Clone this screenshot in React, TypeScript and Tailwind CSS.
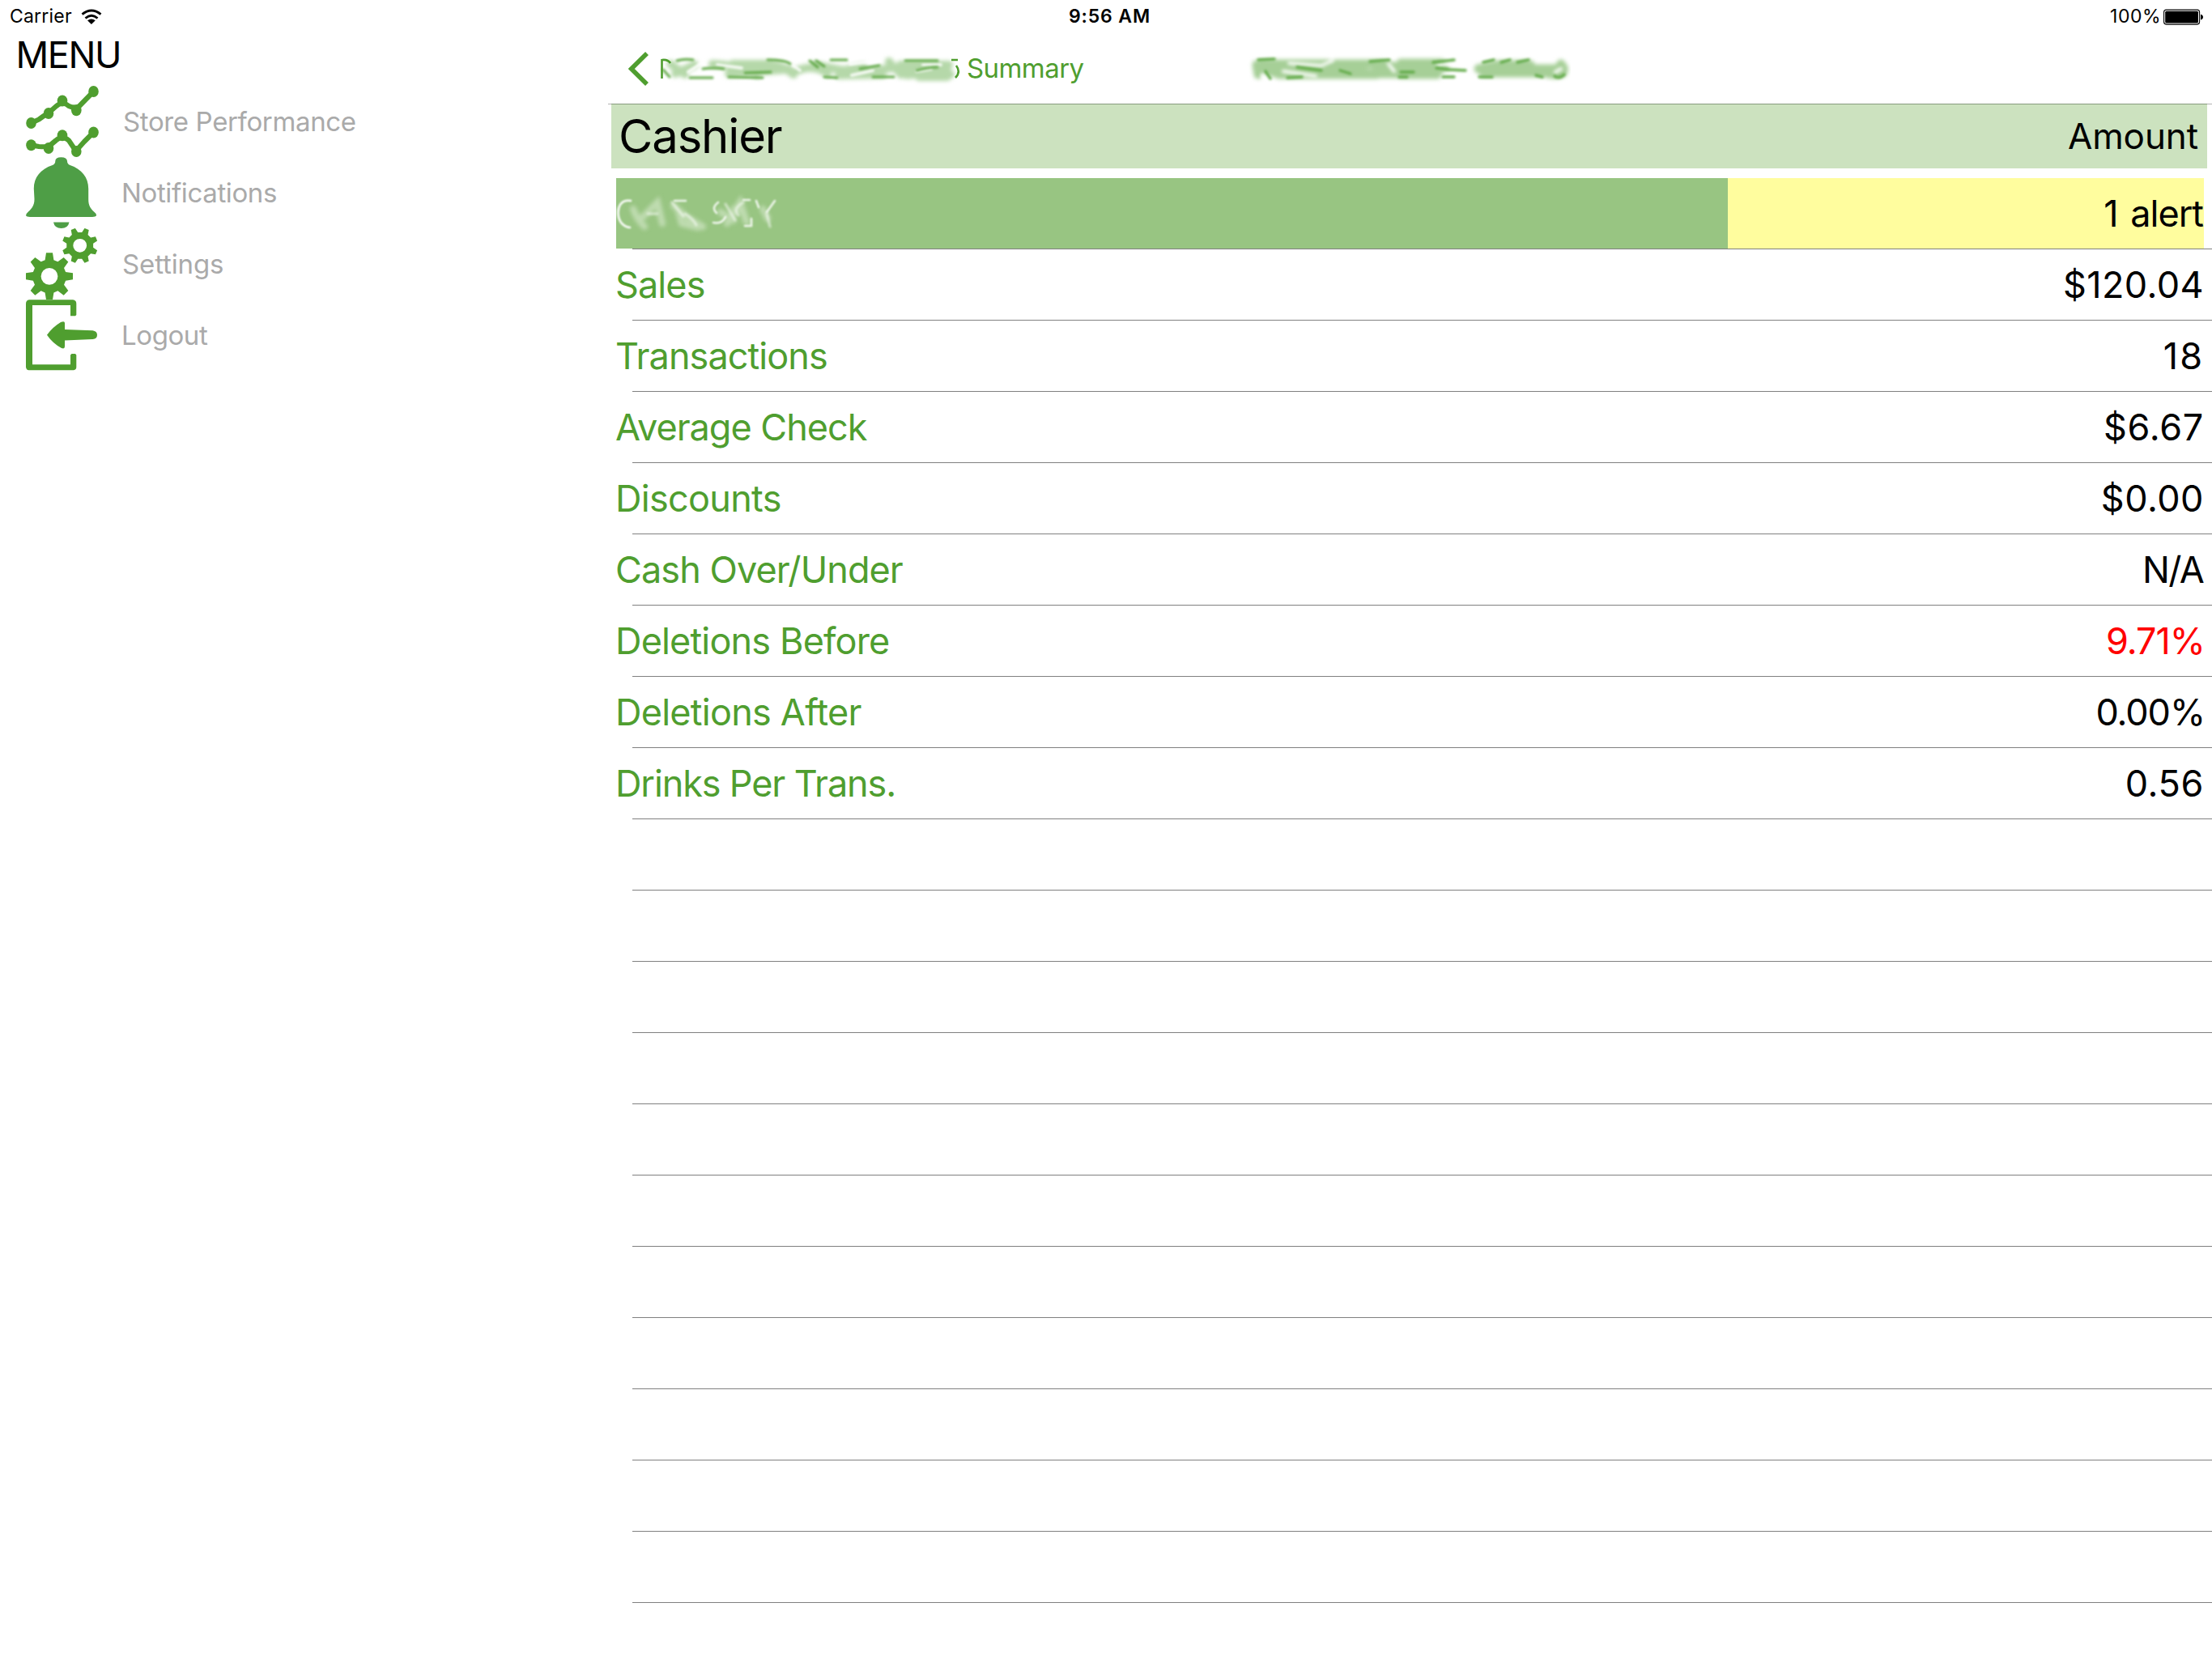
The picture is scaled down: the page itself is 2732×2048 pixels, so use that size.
import type { ReactNode } from 'react';

interface MenuItem {
  label: string;
  labelClass: string;
  icon: ReactNode;
}

interface Metric {
  label: string;
  labelClass: string;
  value: string;
  valueClass: string;
}

const metrics: Metric[] = [
  { label: 'Sales', labelClass: 'tracking-[-0.9px]', value: '$120.04', valueClass: 'tracking-[0.4px]' },
  { label: 'Transactions', labelClass: 'tracking-[-0.93px]', value: '18', valueClass: 'tracking-[2px]' },
  { label: 'Average Check', labelClass: 'tracking-[-1px]', value: '$6.67', valueClass: 'tracking-[0.7px]' },
  { label: 'Discounts', labelClass: 'tracking-[-0.7px]', value: '$0.00', valueClass: 'tracking-[0.5px]' },
  { label: 'Cash Over/Under', labelClass: 'tracking-[-0.92px]', value: 'N/A', valueClass: 'mr-px tracking-[-1.7px]' },
  { label: 'Deletions Before', labelClass: 'tracking-[-0.84px]', value: '9.71%', valueClass: '-mr-px tracking-[-1px] text-[#ff0000]' },
  { label: 'Deletions After', labelClass: 'tracking-[-0.76px]', value: '0.00%', valueClass: '-mr-px tracking-[-1.1px]' },
  { label: 'Drinks Per Trans.', labelClass: 'tracking-[-1.12px]', value: '0.56', valueClass: 'tracking-[0.6px]' },
];

const emptyRows = Array.from({ length: 11 }, (_, i) => i);

// eight teeth around a round body, first tooth at `offset` degrees
function gearPath(cx: number, cy: number, body: number, outer: number, base: number, tip: number, offset: number) {
  const points: string[] = [];
  const root = Math.sqrt(body * body - base * base);
  for (let i = 0; i < 8; i++) {
    const a = ((i * 45 + offset) * Math.PI) / 180;
    const at = (r: number, w: number) =>
      `${(cx + r * Math.cos(a) - w * Math.sin(a)).toFixed(2)} ${(cy + r * Math.sin(a) + w * Math.cos(a)).toFixed(2)}`;
    points.push(at(root, -base), at(outer, -tip), at(outer, tip), at(root, base));
  }
  return `M${points.join('L')}Z`;
}

function PerformanceIcon() {
  const upper = [[38.5, 152], [60, 140], [77, 124.5], [94.3, 136.2], [115.5, 113]];
  const lower = [[38.5, 179.3], [60, 183], [77, 167.3], [94.3, 187], [115.5, 163.5]];
  return (
    <svg className="h-[88px] w-[90px]" viewBox="32 106 90 88" fill="#4f9e2f">
      <g fill="none" stroke="#4f9e2f" strokeWidth="6.2" strokeLinejoin="round">
        <path d="M38.5 152L48 147.5Q54 143 60 139.5L69 131.5Q77 124 85 131Q89 133 94.3 132.5L98 131L115.5 113" />
        <path d="M38.5 179.3L48 181Q55 181.5 60 181L69 173.5Q77 166 85 173.5L92 184H96L104 175L115.5 163.5" />
      </g>
      {[...upper, ...lower].map(([x, y]) => (
        <ellipse key={`${x}-${y}`} cx={x} cy={y} rx="6.3" ry="7" />
      ))}
    </svg>
  );
}

function BellIcon() {
  return (
    <svg className="h-[88px] w-[90px]" viewBox="32 194 90 88" fill="#4e9e46">
      <path d="M68.3 199Q68.3 194.2 75.5 194.2T83 199Q83 202.6 86.5 204C101 209 109.2 219 109.2 233V246C109.2 253 111 257 116 261.5Q119.3 264 119 266.3Q118 268 114 268H37Q33 268 32 266.3Q32 264 35 261.5C40 257 42.5 253 42.5 246L41.8 233C41.8 219 50 209 64.8 204Q68.3 202.6 68.3 199Z" />
      <path d="M66 274.5H85.5Q84 282 75.7 282T66 274.5Z" />
    </svg>
  );
}

function GearsIcon() {
  return (
    <svg className="h-[88px] w-[90px]" viewBox="32 282 90 88" fill="#4f9e2f">
      <path fillRule="evenodd" d={`${gearPath(61, 341.3, 20.8, 29, 5.4, 4, 0)}M50.6 341.3a10.4 10.4 0 1 0 20.8 0a10.4 10.4 0 1 0 -20.8 0Z`} />
      <path fillRule="evenodd" d={`${gearPath(98.7, 303.3, 16.6, 22, 4, 2.8, 22.5)}M90.3 303.3a8.4 8.4 0 1 0 16.8 0a8.4 8.4 0 1 0 -16.8 0Z`} />
    </svg>
  );
}

function LogoutIcon() {
  return (
    <svg className="h-[88px] w-[90px]" viewBox="32 370 90 88" fill="#4f9e2f">
      <path d="M36 370.3H90Q94.3 370.8 94.3 375V389L93 390.3H87V377H40V450.3H87V438.5L88.5 437H93L94.3 438.5V453.5Q94.3 456.8 91 457.3H35.5Q32.5 457 32 453.5V375Q32 371 36 370.3Z" />
      <path d="M58 413.7Q65 404 75 398Q80 396 80 399V407L114.5 408.2Q120 409 120 413.7T114.5 419L80 420.5V428Q80 431.5 76 430Q65 424 58 413.7Z" />
    </svg>
  );
}

const menu: MenuItem[] = [
  { label: 'Store Performance', labelClass: 'ml-[2px] tracking-[-0.37px]', icon: <PerformanceIcon /> },
  { label: 'Notifications', labelClass: 'tracking-[-0.37px]', icon: <BellIcon /> },
  { label: 'Settings', labelClass: 'ml-px tracking-[-0.13px]', icon: <GearsIcon /> },
  { label: 'Logout', labelClass: 'tracking-[-0.4px]', icon: <LogoutIcon /> },
];

function StatusBar() {
  return (
    <header className="grid h-[41px] shrink-0 grid-cols-[1320px_1fr_auto] items-center pr-[10px] text-[23px] leading-none">
      <div className="flex items-center pl-3">
        <span className="tracking-[0.2px]">Carrier</span>
        <svg className="ml-[11px] h-5 w-[26px]" viewBox="99.5 10.5 26 20" fill="none" stroke="#000" strokeWidth="2.8">
          <path d="M101 17.2Q112.5 7.8 124 17.2" />
          <path d="M105 22Q112.5 15.6 120 22" />
          <path d="M107.5 24.8Q112.5 21 117.3 24.8L112.4 29.5Z" fill="#000" stroke="none" />
        </svg>
      </div>
      <span className="font-semibold tracking-[0.87px]">9:56 AM</span>
      <div className="flex items-center">
        <span className="tracking-[0.5px]">100%</span>
        <svg className="ml-[3px] h-5 w-[50px]" viewBox="2672 10.5 50 20">
          <rect x="2672.6" y="11.6" width="44" height="18" rx="3" fill="none" stroke="#000" strokeWidth="1.1" />
          <rect x="2674.2" y="13.2" width="40.8" height="14.8" rx="1.5" />
          <path d="M2718 17.2Q2721 18 2721 20.6T2718 24Z" />
        </svg>
      </div>
    </header>
  );
}

function SmudgedStoreName() {
  return (
    <svg className="ml-[7px] h-[48px] w-[380px]" viewBox="808 60 380 48" fill="none">
      <g className="blur-[2.5px]" stroke="#b5d8a9" strokeWidth="10" strokeLinecap="round">
        <path d="M828 78Q836 84 846 91M834 90L858 79M880 78Q910 79 935 91M905 78H950Q968 80 980 91M900 90L970 85M930 84H975" />
        <path d="M985 86Q1005 78 1022 90M1006 79L1042 86L1066 81M1036 92L1090 91M1064 89L1100 83" />
        <path d="M1098 75Q1108 90 1122 92M1112 79H1172M1112 85H1170M1112 91H1174M1135 94H1170" />
      </g>
      <g className="blur-[1.8px]" stroke="#fff" strokeOpacity="0.85" strokeWidth="4" strokeLinecap="round">
        <path d="M868 76L850 88M886 79L916 83M975 76L988 86M1050 78L1084 74M1052 92L1078 86M1132 87L1150 84M1140 79H1162" />
      </g>
      <g className="blur-[1.4px]" stroke="#5fa845" strokeWidth="3" strokeLinecap="round">
        <path d="M836 74Q846 71 856 73M868 84Q882 82 894 84M920 89L952 88M900 94L942 95M948 73Q970 73 976 78" />
        <path d="M1000 74L1010 82M1008 74L1018 81M1026 73H1046M1018 94L1034 95M1062 84L1086 80M1078 94H1104" />
        <path d="M1118 74H1158M1132 86Q1146 82 1158 82M852 95H880M819 85L827 94" />
      </g>
      <g className="blur-[0.5px]" stroke="#4f9e2f" strokeWidth="2.6">
        <path d="M817.5 72V96M817.5 73Q825 72 828 77M1175 73H1183M1181 80Q1187 88 1180 95" />
      </g>
    </svg>
  );
}

function SmudgedTitle() {
  return (
    <svg className="h-[48px] w-[400px]" viewBox="1540 60 400 48" fill="none">
      <g className="blur-[2.5px]" stroke="#a6cf97" strokeWidth="11" strokeLinecap="round">
        <path d="M1552 79L1554 91M1556 78H1640M1562 84L1580 91H1700M1600 82L1640 88M1650 78L1690 90M1566 84H1650" />
        <path d="M1652 78H1705L1740 85M1690 90H1725M1730 77H1780M1728 84L1785 84M1730 91H1775M1700 83H1740" />
        <path d="M1826 84L1850 79H1890M1832 89H1910M1840 84H1924L1928 78M1912 90Q1934 94 1931 82" />
      </g>
      <g className="blur-[2px]" stroke="#fff" strokeWidth="4" strokeLinecap="round">
        <path d="M1559 92L1562 98M1585 87L1625 93M1632 80L1592 77M1715 78L1722 87M1645 74L1632 80M1776 79L1812 76M1785 90H1816M1921 88L1928 84" />
      </g>
      <g className="blur-[1.6px]" stroke="#62ab49" strokeWidth="3.4" strokeLinecap="round">
        <path d="M1554 73L1574 72M1563 87L1569 96M1602 82L1632 86M1590 95L1608 94M1655 86L1668 90" />
        <path d="M1692 75L1716 73M1730 88H1746M1770 76L1796 73M1774 83L1790 85L1810 86M1782 94H1796M1728 94H1738" />
        <path d="M1832 76L1845 73M1854 76L1865 73M1874 76L1888 73M1827 94H1843M1897 92L1905 94M1920 93Q1926 97 1932 91" />
      </g>
    </svg>
  );
}

function SmudgedCashier() {
  return (
    <svg className="h-[60px] w-[210px]" viewBox="761 234 210 60" fill="none" strokeLinecap="round">
      <g className="blur-[2.5px]" stroke="#d4e8ca" strokeOpacity="0.65" strokeWidth="8">
        <path d="M782 258Q786 270 796 280M794 268L812 250L818 276M832 254L848 268L868 280M838 262L842 276L862 281" />
        <path d="M898 276L914 250L922 274M890 262L906 272M906 258L918 262M942 258L948 270" />
      </g>
      <g className="blur-[0.8px]" stroke="#fff" strokeWidth="2.6">
        <path d="M779 248C766 246 763 257 763.5 264C764 274 770 280 778 281" />
        <path strokeOpacity="0.85" d="M833 248H847M887 250Q878 257 885 263M896 268Q892 277 881 275M918 247H926M928 270V279H920M934 248L937 256M957 248L947 262" />
      </g>
      <g className="blur-[1.5px]" stroke="#fff" strokeOpacity="0.6" strokeWidth="3">
        <path d="M800 264H812M830 250L844 267M846 264Q856 270 860 278M918 250Q904 258 912 266M947 264L951 280M896 252L908 272" />
      </g>
    </svg>
  );
}

function Sidebar() {
  return (
    <aside className="w-[751px] shrink-0">
      <h1 className="flex h-[54px] items-center pb-px pl-[19.5px] text-[45px] leading-none tracking-[-1.4px]">MENU</h1>
      <nav className="pt-[11px] pl-8">
        {menu.map((item) => (
          <a key={item.label} className="flex h-[88px] items-center gap-7 text-[33px] leading-none text-[#aaaaaa]">
            {item.icon}
            <span className={item.labelClass}>{item.label}</span>
          </a>
        ))}
      </nav>
    </aside>
  );
}

export default function App() {
  return (
    <div className="flex h-[2048px] w-[2732px] flex-col overflow-hidden bg-white font-['Inter',sans-serif] text-black">
      <StatusBar />
      <div className="flex flex-1">
        <Sidebar />
        <main className="flex-1">
          <div className="flex h-[88px] items-center border-b border-[#b2b2b2] pl-[25px] text-[#4f9e2f]">
            <svg className="h-[42px] w-[25px]" viewBox="776 63 25 42" fill="none" stroke="#4f9e2f" strokeWidth="5.6">
              <path d="M799 65L779.8 84L799 103" />
            </svg>
            <SmudgedStoreName />
            <span className="ml-[6px] w-[346px] text-[33px] leading-none tracking-[-0.58px]">Summary</span>
            <SmudgedTitle />
          </div>

          <div className="-mt-px mr-[6px] ml-[4px] flex h-20 items-center justify-between border-t border-[#879c7e] bg-[#cce2bf] pr-[11px] pb-[2px] pl-[9px] leading-none">
            <h2 className="text-[58px] tracking-[-1.15px]">Cashier</h2>
            <span className="text-[44px] tracking-[-0.1px]">Amount</span>
          </div>

          <div className="pt-3 text-[45px] leading-none">
            <div className="mr-[10px] ml-[10px] flex h-[87px]">
              <div className="flex w-[1373px] items-center bg-[#98c582]">
                <SmudgedCashier />
              </div>
              <div className="flex flex-1 items-center justify-end bg-[#fffd9e] pr-px">
                <span className="tracking-[-1px] [word-spacing:4px]">1 alert</span>
              </div>
            </div>
            <div className="ml-[30px] h-px bg-[#808080]" />

            {metrics.map((metric) => (
              <div key={metric.label}>
                <div className="flex h-[87px] items-center justify-between pr-[10px] pl-[9px]">
                  <span className={`text-[#4f9e2f] ${metric.labelClass}`}>{metric.label}</span>
                  <span className={metric.valueClass}>{metric.value}</span>
                </div>
                <div className="ml-[30px] h-px bg-[#808080]" />
              </div>
            ))}

            {emptyRows.map((row) => (
              <div key={row} className="ml-[30px] h-[88px] border-b border-[#808080]" />
            ))}
          </div>
        </main>
      </div>
    </div>
  );
}
